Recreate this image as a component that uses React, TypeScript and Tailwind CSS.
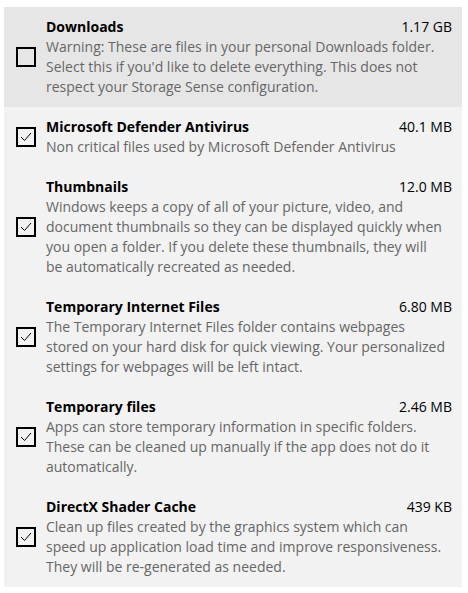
import React from "react"

const items = [
  {
    title: "Downloads",
    size: "1.17 GB",
    checked: false,
    lines: [
      "Warning: These are files in your personal Downloads folder.",
      "Select this if you'd like to delete everything. This does not",
      "respect your Storage Sense configuration.",
    ],
  },
  {
    title: "Microsoft Defender Antivirus",
    size: "40.1 MB",
    checked: true,
    lines: ["Non critical files used by Microsoft Defender Antivirus"],
  },
  {
    title: "Thumbnails",
    size: "12.0 MB",
    checked: true,
    lines: [
      "Windows keeps a copy of all of your picture, video, and",
      "document thumbnails so they can be displayed quickly when",
      "you open a folder. If you delete these thumbnails, they will",
      "be automatically recreated as needed.",
    ],
  },
  {
    title: "Temporary Internet Files",
    size: "6.80 MB",
    checked: true,
    lines: [
      "The Temporary Internet Files folder contains webpages",
      "stored on your hard disk for quick viewing. Your personalized",
      "settings for webpages will be left intact.",
    ],
  },
  {
    title: "Temporary files",
    size: "2.46 MB",
    checked: true,
    lines: [
      "Apps can store temporary information in specific folders.",
      "These can be cleaned up manually if the app does not do it",
      "automatically.",
    ],
  },
  {
    title: "DirectX Shader Cache",
    size: "439 KB",
    checked: true,
    lines: [
      "Clean up files created by the graphics system which can",
      "speed up application load time and improve responsiveness.",
      "They will be re-generated as needed.",
    ],
  },
]

function Checkbox({ checked }: { checked: boolean }) {
  return (
    <div className="w-5 h-5 border-2 border-black flex items-center justify-center shrink-0">
      {checked && (
        <svg width="12" height="10" viewBox="0 0 12 10" fill="none">
          <path d="M1 5 L4.5 8.5 L11 1" stroke="#000" strokeWidth="1" />
        </svg>
      )}
    </div>
  )
}

export default function App() {
  return (
    <div className="w-[468px] h-[593px] bg-white pt-[7px] pl-1" style={{ fontFamily: "'Open Sans', 'Noto Sans', sans-serif" }}>
      <div className="w-[458px] bg-[#f2f2f2]">
        {items.map((item, i) => (
          <div
            key={item.title}
            className={`flex items-center py-[10px] pl-3 pr-[10px] ${i === 0 ? "bg-[#e6e6e6]" : ""}`}
          >
            <Checkbox checked={item.checked} />
            <div className="ml-[10px] flex-1 text-[14px] leading-5">
              <div className="flex justify-between">
                <span className="font-bold text-black">{item.title}</span>
                <span className="text-black">{item.size}</span>
              </div>
              {item.lines.map((l) => (
                <div key={l} className="text-[#666666] whitespace-nowrap">
                  {l}
                </div>
              ))}
            </div>
          </div>
        ))}
      </div>
    </div>
  )
}
